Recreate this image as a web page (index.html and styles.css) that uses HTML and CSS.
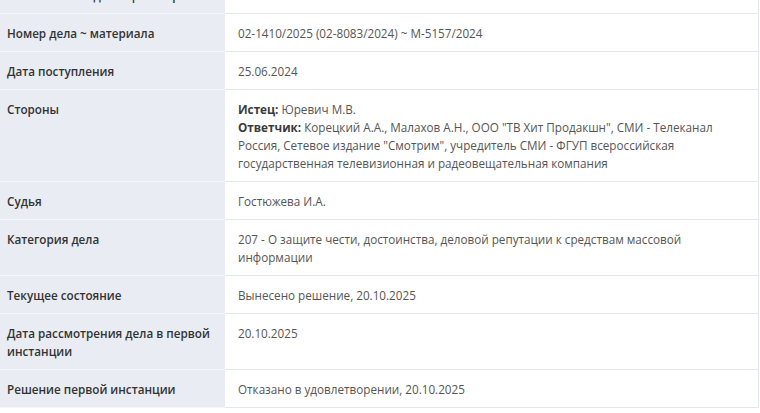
FILE: index.html
```html
<!DOCTYPE html>
<html lang="ru">
<head>
<meta charset="utf-8">
<link rel="stylesheet" href="styles.css">
</head>
<body>
<div class="viewport">
  <div class="card">
    <div class="row">
      <div class="label">Уникальный идентификатор</div>
      <div class="value"></div>
    </div>
    <div class="row">
      <div class="label">Номер дела ~ материала</div>
      <div class="value">02-1410/2025 (02-8083/2024) ~ М-5157/2024</div>
    </div>
    <div class="row">
      <div class="label">Дата поступления</div>
      <div class="value">25.06.2024</div>
    </div>
    <div class="row">
      <div class="label">Стороны</div>
      <div class="value">
        <div><b>Истец:</b> Юревич М.В.</div>
        <div><b>Ответчик:</b> Корецкий А.А., Малахов А.Н., ООО "ТВ Хит Продакшн", СМИ - Телеканал Россия, Сетевое издание "Смотрим", учредитель СМИ - ФГУП всероссийская государственная телевизионная и радеовещательная компания</div>
      </div>
    </div>
    <div class="row">
      <div class="label">Судья</div>
      <div class="value">Гостюжева И.А.</div>
    </div>
    <div class="row">
      <div class="label">Категория дела</div>
      <div class="value">207 - О защите чести, достоинства, деловой репутации к средствам массовой информации</div>
    </div>
    <div class="row">
      <div class="label">Текущее состояние</div>
      <div class="value">Вынесено решение, 20.10.2025</div>
    </div>
    <div class="row">
      <div class="label">Дата рассмотрения дела в первой инстанции</div>
      <div class="value">20.10.2025</div>
    </div>
    <div class="row">
      <div class="label">Решение первой инстанции</div>
      <div class="value">Отказано в удовлетворении, 20.10.2025</div>
    </div>
  </div>
</div>
</body>
</html>
```
FILE: styles.css
```css
html, body {
  margin: 0;
  padding: 0;
  background: #ffffff;
}
body {
  font-family: "Open Sans", "Noto Sans", sans-serif;
  font-size: 11.7px;
  line-height: 18px;
  color: #555555;
  overflow: hidden;
  height: 413px;
}
.viewport {
  width: 759px;
  margin-top: -24px;
}
.card {
  display: grid;
  grid-template-columns: 225px 1fr;
  border-right: 1px solid #e3e7ee;
}
.row {
  display: contents;
}
.label,
.value {
  padding: 10px 8px 9px 7px;
  border-bottom: 1px solid #e4e7ec;
}
.label {
  background: #e9edf3;
  color: #333333;
  font-weight: 600;
  border-bottom-color: #f3f5f8;
}
.value {
  background: #ffffff;
  padding-left: 13px;
  padding-right: 30px;
}
.value b {
  font-weight: 700;
  color: #3a3a3a;
}
```
